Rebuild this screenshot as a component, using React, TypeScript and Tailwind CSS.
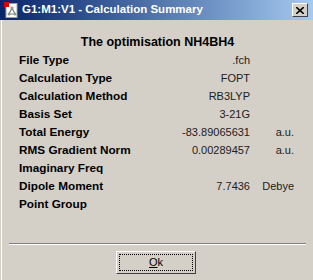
import React from 'react'

const rows: { label: string; value?: string; unit?: string }[] = [
  { label: 'File Type', value: '.fch' },
  { label: 'Calculation Type', value: 'FOPT' },
  { label: 'Calculation Method', value: 'RB3LYP' },
  { label: 'Basis Set', value: '3-21G' },
  { label: 'Total Energy', value: '-83.89065631', unit: 'a.u.' },
  { label: 'RMS Gradient Norm', value: '0.00289457', unit: 'a.u.' },
  { label: 'Imaginary Freq' },
  { label: 'Dipole Moment', value: '7.7436', unit: 'Debye' },
  { label: 'Point Group' },
]

function AppIcon() {
  return (
    <svg width="16" height="16" viewBox="0 0 16 16" className="shrink-0">
      <rect x="3" y="1.5" width="11" height="14" fill="#fff" stroke="#a0a0a0" strokeWidth="1" />
      <rect x="1" y="0" width="5" height="5" fill="#e00000" />
      <line x1="9" y1="6" x2="6" y2="12" stroke="#7a8a7a" strokeWidth="1.2" />
      <line x1="9" y1="6" x2="12" y2="12" stroke="#7a8a7a" strokeWidth="1.2" />
      <line x1="6" y1="12" x2="12" y2="12" stroke="#7a8a7a" strokeWidth="1" />
      <circle cx="9" cy="6" r="1.5" fill="#8a9a8a" />
      <circle cx="6" cy="12" r="1.5" fill="#8a9a8a" />
      <circle cx="12" cy="12" r="1.5" fill="#8a9a8a" />
    </svg>
  )
}

export default function App() {
  return (
    <div
      className="w-[313px] h-[280px] bg-[#d4d0c8] overflow-hidden flex flex-col text-black"
      style={{ fontFamily: '"Liberation Sans", Arial, sans-serif' }}
    >
      <div className="h-[20px] shrink-0 flex items-center pl-[3px] pr-[5px] bg-gradient-to-r from-[#0a246a] to-[#a6caf0]">
        <AppIcon />
        <span className="ml-[3px] text-white font-bold text-[11.5px] leading-none">
          G1:M1:V1 - Calculation Summary
        </span>
        <div className="ml-auto w-[16px] h-[14px] bg-[#d4d0c8] border border-t-white border-l-white border-r-[#404040] border-b-[#404040] flex items-center justify-center">
          <svg width="8" height="7" viewBox="0 0 8 7">
            <path d="M0 0l8 7M8 0L0 7" stroke="#000" strokeWidth="1.6" />
          </svg>
        </div>
      </div>

      <div className="flex-1 border-l border-white ml-[1px] flex flex-col">
        <div className="mt-[14px] h-[16px] text-center font-bold text-[12.5px] leading-[16px]">
          The optimisation NH4BH4
        </div>

        <div className="mt-[1px] pl-[17px] flex flex-col">
          {rows.map((r) => (
            <div key={r.label} className="h-[18px] flex items-center">
              <span className="w-[141px] font-bold text-[11.75px]">{r.label}</span>
              <span className="w-[90px] text-right text-[#202020] text-[11px]">{r.value}</span>
              <span className="w-[44px] text-right text-[#202020] text-[11px]">{r.unit}</span>
            </div>
          ))}
        </div>

        <div className="mt-[30px] ml-[7px] mr-[7px] border-t border-t-[#808080] border-b border-b-white" />

        <div className="mt-[6px] flex justify-center pr-[3px]">
          <button className="w-[80px] h-[23px] bg-[#d4d0c8] border border-t-white border-l-white border-r-[#404040] border-b-[#404040] p-[2px] text-[11px]">
            <div className="w-full h-full border border-dotted border-black flex items-center justify-center">
              <span>
                <span className="underline">O</span>k
              </span>
            </div>
          </button>
        </div>
      </div>
    </div>
  )
}
